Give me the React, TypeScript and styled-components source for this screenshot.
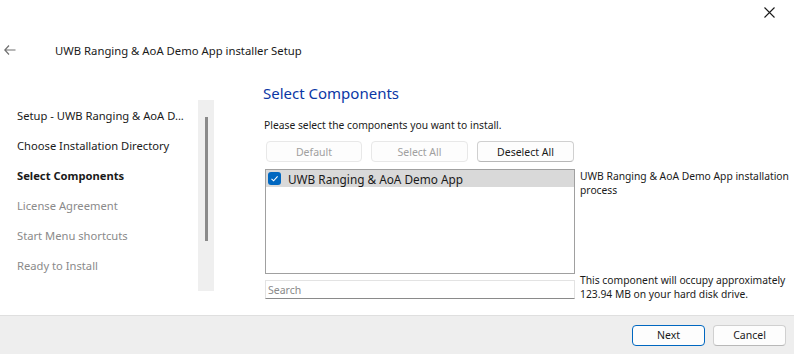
import styled, { createGlobalStyle } from 'styled-components';

const GlobalStyle = createGlobalStyle`
  html, body {
    margin: 0;
    padding: 0;
    background: #ffffff;
  }
  body {
    font-family: 'Noto Sans', 'Open Sans', sans-serif;
    color: #1a1a1a;
  }
`;

const Window = styled.div`
  width: 794px;
  height: 354px;
  display: flex;
  flex-direction: column;
  background: #ffffff;
  overflow: hidden;
`;

const TopBar = styled.div`
  height: 30px;
  display: flex;
  justify-content: flex-end;
  align-items: flex-start;
`;

const CloseButton = styled.div`
  width: 46px;
  height: 24px;
  display: flex;
  align-items: center;
  justify-content: center;
  padding-right: 2px;
`;

const Header = styled.div`
  height: 40px;
  display: flex;
  align-items: center;
  padding-left: 4px;
  gap: 39px;
`;

const WizardTitle = styled.span`
  font-size: 11.3px;
  color: #1a1a1a;
`;

const Body = styled.div`
  flex: 1;
  display: flex;
`;

const Sidebar = styled.div`
  display: flex;
  padding: 30px 0 0 17px;
  height: 191px;
`;

const Steps = styled.ul`
  list-style: none;
  margin: 0;
  padding: 1px 0 0 0;
  width: 181px;
`;

const Step = styled.li<{ $state: 'done' | 'current' | 'todo' }>`
  height: 30px;
  line-height: 30px;
  font-size: 11.2px;
  white-space: nowrap;
  overflow: hidden;
  font-weight: ${({ $state }) => ($state === 'current' ? 700 : 400)};
  color: ${({ $state }) => ($state === 'todo' ? '#8a8a8a' : '#1a1a1a')};
`;

const ScrollTrack = styled.div`
  width: 16px;
  height: 191px;
  background: #efefef;
  display: flex;
  justify-content: center;
  padding-top: 17px;
  box-sizing: border-box;
`;

const ScrollThumb = styled.div`
  width: 3px;
  height: 124px;
  background: #8a8a8a;
  margin-left: 1px;
`;

const Main = styled.div`
  margin-left: 49px;
  padding-top: 12px;
  display: flex;
  flex-direction: column;
`;

const PageTitle = styled.h1`
  margin: 0;
  font-size: 15px;
  font-weight: 400;
  line-height: 22px;
  color: #0a37a5;
`;

const Intro = styled.p`
  margin: 13px 0 0 1px;
  font-size: 10.3px;
  line-height: 16px;
`;

const ButtonRow = styled.div`
  display: flex;
  gap: 9px;
  margin: 8px 0 0 3px;
`;

const Button = styled.button<{ $primary?: boolean; $width: number }>`
  width: ${({ $width }) => $width}px;
  height: 21px;
  padding: 0;
  font-family: inherit;
  font-size: 10.5px;
  background: #fdfdfd;
  border-radius: 4px;
  color: #1a1a1a;
  border: 1px solid ${({ $primary }) => ($primary ? '#0067c0' : '#d0d0d0')};
  border-bottom-color: ${({ $primary }) => ($primary ? '#0067c0' : '#b8b8b8')};
  &:disabled {
    color: #a0a0a0;
    border-color: #e8e8e8;
    background: #fdfdfd;
  }
`;

const ComponentsGrid = styled.div`
  display: grid;
  grid-template-columns: 310px 1fr;
  grid-template-rows: 105px 19px;
  column-gap: 5px;
  row-gap: 6px;
  margin: 7px 0 0 2px;
  width: 530px;
`;

const ListBox = styled.div`
  border: 1px solid #a0a0a0;
  box-sizing: border-box;
  background: #ffffff;
`;

const ListItem = styled.div<{ $selected?: boolean }>`
  height: 17px;
  display: flex;
  align-items: center;
  gap: 7px;
  padding-left: 2px;
  background: ${({ $selected }) => ($selected ? '#d9d9d9' : 'transparent')};
  font-size: 11.8px;
`;

const CheckBox = styled.span`
  width: 13px;
  height: 13px;
  border-radius: 3px;
  background: #0067c0;
  display: flex;
  align-items: center;
  justify-content: center;
`;

const SearchInput = styled.input`
  box-sizing: border-box;
  height: 19px;
  border: 1px solid #e3e3e3;
  border-bottom-color: #8a8a8a;
  padding: 0 2px;
  font-family: inherit;
  font-size: 10.5px;
  outline: none;
  &::placeholder {
    color: #8a8a8a;
  }
`;

const SideNote = styled.div<{ $bottom?: boolean }>`
  font-size: 10.3px;
  line-height: 14px;
  white-space: nowrap;
  align-self: ${({ $bottom }) => ($bottom ? 'end' : 'start')};
  margin-bottom: ${({ $bottom }) => ($bottom ? '-2px' : '0')};
`;

const Footer = styled.div`
  height: 39px;
  background: #eeeeee;
  border-top: 1px solid #dfdfdf;
  box-sizing: border-box;
  display: flex;
  justify-content: flex-end;
  align-items: center;
  gap: 8px;
  padding-right: 8px;
`;

const steps: { label: string; state: 'done' | 'current' | 'todo' }[] = [
  { label: 'Setup - UWB Ranging & AoA D...', state: 'done' },
  { label: 'Choose Installation Directory', state: 'done' },
  { label: 'Select Components', state: 'current' },
  { label: 'License Agreement', state: 'todo' },
  { label: 'Start Menu shortcuts', state: 'todo' },
  { label: 'Ready to Install', state: 'todo' },
];

export default function App() {
  return (
    <>
      <GlobalStyle />
      <Window>
        <TopBar>
          <CloseButton>
            <svg width="11" height="11" viewBox="0 0 11 11">
              <path d="M0.5 0.5L10.5 10.5M10.5 0.5L0.5 10.5" stroke="#1a1a1a" strokeWidth="1.1" />
            </svg>
          </CloseButton>
        </TopBar>
        <Header>
          <svg width="12" height="10" viewBox="0 0 12 10">
            <path d="M5 0.5L0.8 5L5 9.5M0.8 5H11.5" stroke="#707070" strokeWidth="1.2" fill="none" />
          </svg>
          <WizardTitle>UWB Ranging &amp; AoA Demo App installer Setup</WizardTitle>
        </Header>
        <Body>
          <Sidebar>
            <Steps>
              {steps.map((s) => (
                <Step key={s.label} $state={s.state}>
                  {s.label}
                </Step>
              ))}
            </Steps>
            <ScrollTrack>
              <ScrollThumb />
            </ScrollTrack>
          </Sidebar>
          <Main>
            <PageTitle>Select Components</PageTitle>
            <Intro>Please select the components you want to install.</Intro>
            <ButtonRow>
              <Button $width={96} disabled>
                Default
              </Button>
              <Button $width={97} disabled>
                Select All
              </Button>
              <Button $width={97}>Deselect All</Button>
            </ButtonRow>
            <ComponentsGrid>
              <ListBox>
                <ListItem $selected>
                  <CheckBox>
                    <svg width="9" height="9" viewBox="0 0 9 9">
                      <path d="M1.5 4.8L3.6 6.8L7.6 2.4" stroke="#ffffff" strokeWidth="1.1" fill="none" />
                    </svg>
                  </CheckBox>
                  UWB Ranging &amp; AoA Demo App
                </ListItem>
              </ListBox>
              <SideNote>
                UWB Ranging &amp; AoA Demo App installation
                <br />
                process
              </SideNote>
              <SearchInput placeholder="Search" />
              <SideNote $bottom>
                This component will occupy approximately
                <br />
                123.94 MB on your hard disk drive.
              </SideNote>
            </ComponentsGrid>
          </Main>
        </Body>
        <Footer>
          <Button $width={73} $primary>
            Next
          </Button>
          <Button $width={73}>Cancel</Button>
        </Footer>
      </Window>
    </>
  );
}
